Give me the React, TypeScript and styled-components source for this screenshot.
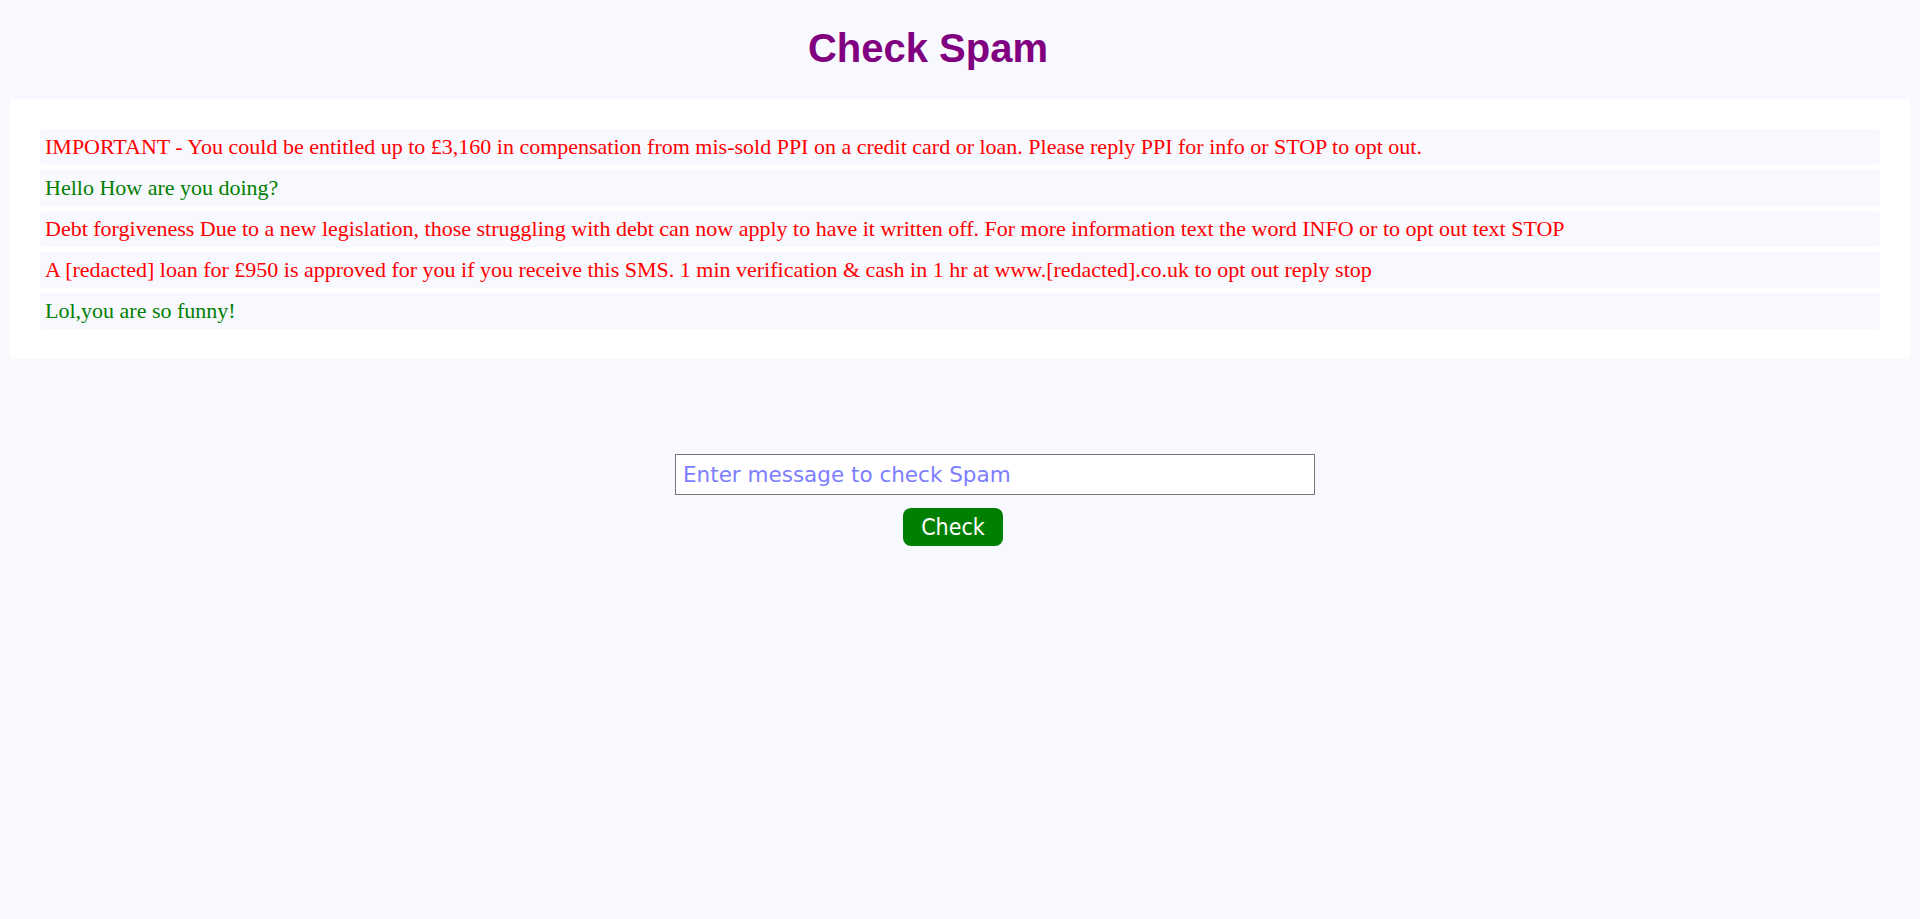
import React from "react";
import styled, { createGlobalStyle } from "styled-components";

const GlobalStyle = createGlobalStyle`
  html, body {
    margin: 0;
    padding: 0;
    background: #f8f8ff;
  }
  body {
    font-family: "Liberation Serif", "Times New Roman", serif;
  }
`;

const Page = styled.div`
  display: flex;
  flex-direction: column;
  min-height: 919px;
  background: #f8f8ff;
`;

const Title = styled.h1`
  margin: 28px 0 31px;
  padding-right: 64px;
  text-align: center;
  font-family: "Liberation Sans", Arial, sans-serif;
  font-weight: bold;
  font-size: 40px;
  line-height: 40px;
  color: #800080;
`;

const Panel = styled.section`
  margin: 0 10px;
  padding: 30px;
  background: #ffffff;
  display: flex;
  flex-direction: column;
  gap: 5px;
`;

const Message = styled.div<{ $spam: boolean }>`
  padding: 5px;
  background: #f8f8ff;
  border-radius: 2px;
  font-family: "Liberation Serif", "Times New Roman", serif;
  font-size: 22px;
  line-height: 26px;
  color: ${(p) => (p.$spam ? "#ff0000" : "#008000")};
`;

const Form = styled.form`
  margin-top: 95px;
  display: flex;
  flex-direction: column;
  align-items: center;
  gap: 13px;
`;

const Input = styled.input`
  box-sizing: border-box;
  width: 640px;
  height: 41px;
  margin-left: 70px;
  padding: 0 7px;
  border: 1px solid #767676;
  border-radius: 0;
  background: #ffffff;
  font-family: "DejaVu Sans", Verdana, sans-serif;
  font-size: 21.5px;
  color: #3030ff;
  outline: none;
  &::placeholder {
    color: #7d7dff;
    opacity: 1;
  }
`;

const Button = styled.button`
  box-sizing: border-box;
  width: 100px;
  height: 38px;
  margin-right: 14px;
  border: none;
  border-radius: 8px;
  background: #008000;
  color: #ffffff;
  font-family: "DejaVu Sans Condensed", "DejaVu Sans", sans-serif;
  font-size: 23px;
  cursor: pointer;
`;

const messages: { text: string; spam: boolean }[] = [
  {
    text: "IMPORTANT - You could be entitled up to £3,160 in compensation from mis-sold PPI on a credit card or loan. Please reply PPI for info or STOP to opt out.",
    spam: true,
  },
  { text: "Hello How are you doing?", spam: false },
  {
    text: "Debt forgiveness Due to a new legislation, those struggling with debt can now apply to have it written off. For more information text the word INFO or to opt out text STOP",
    spam: true,
  },
  {
    text: "A [redacted] loan for £950 is approved for you if you receive this SMS. 1 min verification & cash in 1 hr at www.[redacted].co.uk to opt out reply stop",
    spam: true,
  },
  { text: "Lol,you are so funny!", spam: false },
];

export default function App() {
  return (
    <Page>
      <GlobalStyle />
      <Title>Check Spam</Title>
      <Panel>
        {messages.map((m, i) => (
          <Message key={i} $spam={m.spam}>
            {m.text}
          </Message>
        ))}
      </Panel>
      <Form onSubmit={(e) => e.preventDefault()}>
        <Input type="text" placeholder="Enter message to check Spam" />
        <Button type="submit">Check</Button>
      </Form>
    </Page>
  );
}
